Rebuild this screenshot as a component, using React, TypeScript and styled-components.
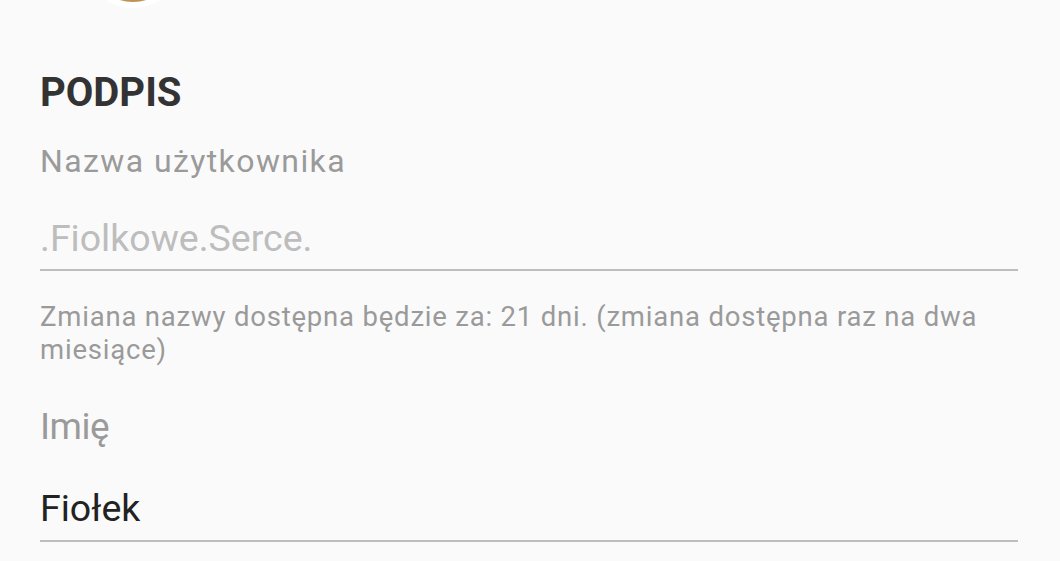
import React from "react";
import styled, { createGlobalStyle } from "styled-components";

const Global = createGlobalStyle`
  html, body { margin: 0; padding: 0; background: #fafafa; }
  body { font-family: Roboto, "Noto Sans", Arial, sans-serif; overflow: hidden; }
`;

const Page = styled.div`
  width: 1060px;
  height: 561px;
  box-sizing: border-box;
  padding: 0 42px 0 40px;
  display: flex;
  flex-direction: column;
  background: #fafafa;
  overflow: hidden;
`;

const Avatar = styled.div`
  width: 90px;
  height: 90px;
  margin-top: -88px;
  margin-left: 48px;
  border-radius: 50%;
  background: radial-gradient(circle at 50% 80%, #c9a062 0%, #a7783a 60%, #8a6130 100%);
  box-shadow: 0 0 0 6px #ffffff;
  flex-shrink: 0;
`;

const SectionTitle = styled.h2`
  margin: 67px 0 0;
  font-size: 40px;
  line-height: 48px;
  font-weight: 700;
  color: #333333;
`;

const FieldLabel = styled.div<{ $size: number; $lh: number; $mt: number; $ls: number }>`
  margin-top: ${(p) => p.$mt}px;
  font-size: ${(p) => p.$size}px;
  line-height: ${(p) => p.$lh}px;
  letter-spacing: ${(p) => p.$ls}px;
  color: #9a9a9a;
`;

const Field = styled.div<{ $mt: number; $pb: number }>`
  margin-top: ${(p) => p.$mt}px;
  padding-bottom: ${(p) => p.$pb}px;
  border-bottom: 2.5px solid #bdbdbd;
`;

const FieldValue = styled.div<{ $muted?: boolean }>`
  font-size: 37.5px;
  line-height: 44px;
  color: ${(p) => (p.$muted ? "#bdbdbd" : "#222222")};
`;

const Helper = styled.p`
  margin: 29px 0 0;
  font-size: 27.5px;
  line-height: 33px;
  letter-spacing: 0.8px;
  color: #9a9a9a;
`;

export default function App() {
  return (
    <>
      <Global />
      <Page>
        <Avatar />
        <SectionTitle>PODPIS</SectionTitle>
        <FieldLabel $size={32} $lh={36} $mt={26} $ls={1.4}>Nazwa użytkownika</FieldLabel>
        <Field $mt={37} $pb={8.5}>
          <FieldValue $muted>.Fiolkowe.Serce.</FieldValue>
        </Field>
        <Helper>
          Zmiana nazwy dostępna będzie za: 21 dni. (zmiana dostępna raz na dwa miesiące)
        </Helper>
        <FieldLabel $size={37} $lh={46} $mt={38} $ls={-0.5}>Imię</FieldLabel>
        <Field $mt={36} $pb={10.5}>
          <FieldValue>Fiołek</FieldValue>
        </Field>
      </Page>
    </>
  );
}
